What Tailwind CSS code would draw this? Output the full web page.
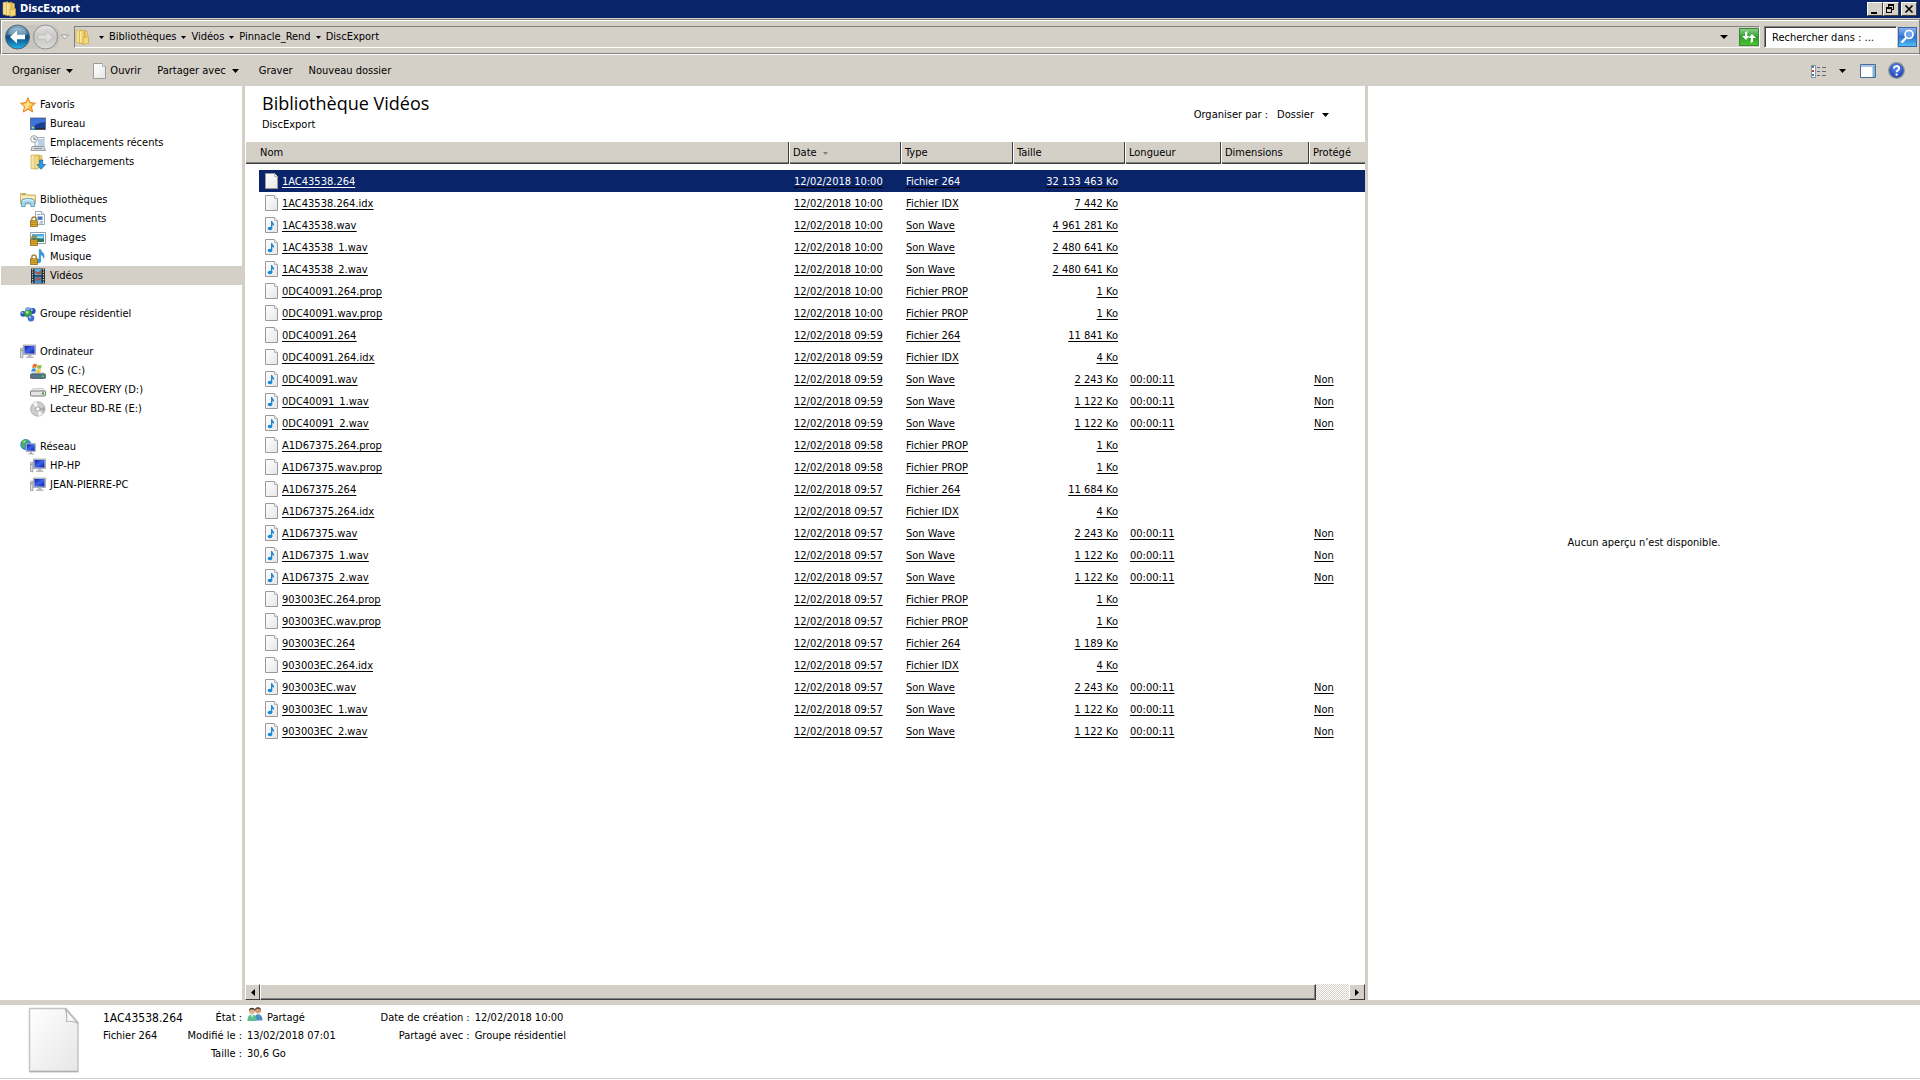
<!DOCTYPE html>
<html lang="fr">
<head>
  <meta charset="UTF-8">
  <meta name="viewport" content="width=device-width, initial-scale=1.0">
  <title>DiscExport</title>
  <script src="https://cdn.jsdelivr.net/npm/@tailwindcss/browser@4"></script>
</head>
<body class="flex flex-col h-screen overflow-hidden bg-white text-black text-[11px] leading-4 font-['DejaVu_Sans_Condensed','DejaVu_Sans',sans-serif]">

  <!-- Icon set -->
  <svg class="absolute size-0" aria-hidden="true">
    <defs>
      <linearGradient id="gFolder" x1="0" x2="1"><stop offset="0" stop-color="#fff3b0"/><stop offset="1" stop-color="#e0b84c"/></linearGradient>
      <linearGradient id="gPage" x1="0" y1="0" x2="1" y2="1"><stop offset="0" stop-color="#fff"/><stop offset="1" stop-color="#e6e6e6"/></linearGradient>
      <linearGradient id="gBlue" x1="0" y1="0" x2="0" y2="1"><stop offset="0" stop-color="#8fb4cc"/><stop offset=".45" stop-color="#1d5f8d"/><stop offset=".5" stop-color="#0b4a7c"/><stop offset="1" stop-color="#25b5ee"/></linearGradient>
      <linearGradient id="gGrey" x1="0" y1="0" x2="0" y2="1"><stop offset="0" stop-color="#e4e4e2"/><stop offset=".5" stop-color="#c6c6c4"/><stop offset="1" stop-color="#dcdcda"/></linearGradient>
      <linearGradient id="gGreen" x1="0" y1="0" x2="0" y2="1"><stop offset="0" stop-color="#8fd08a"/><stop offset=".5" stop-color="#2f9e2c"/><stop offset="1" stop-color="#4cc52e"/></linearGradient>
      <linearGradient id="gSearch" x1="0" y1="0" x2="0" y2="1"><stop offset="0" stop-color="#8fb6ee"/><stop offset=".5" stop-color="#2f6fd4"/><stop offset="1" stop-color="#4fc4f4"/></linearGradient>
      <linearGradient id="gScreen" x1="0" y1="0" x2="1" y2="1"><stop offset="0" stop-color="#0a1ca8"/><stop offset=".5" stop-color="#3d62ea"/><stop offset="1" stop-color="#0a1ca8"/></linearGradient>
      <radialGradient id="gHelp" cx=".5" cy=".35" r=".7"><stop offset="0" stop-color="#5f8df0"/><stop offset="1" stop-color="#1434a4"/></radialGradient>
      <symbol id="folder" viewBox="0 0 16 16">
        <path d="M1 1.500 6 .8V14.500L1 13.500Z" fill="#f3df8e" stroke="#c8a548" stroke-width=".6"/>
        <path d="M4.500 2 10 1.200V15L4.500 14Z" fill="url(#gFolder)" stroke="#c39b39" stroke-width=".6"/>
        <path d="M8 8.500 13.500 7.500V14.500L8 15.500Z" fill="#f5d978" stroke="#c39b39" stroke-width=".6"/>
        <path d="M10 2 12.500 2.500V7.700L10 8.200Z" fill="#edcf6b" stroke="#c39b39" stroke-width=".4"/>
      </symbol>
      <symbol id="page" viewBox="0 0 13 16">
        <path d="M.5.5H9.500L12.500 3.500V15.500H.5Z" fill="url(#gPage)" stroke="#9a9a9a"/>
        <path d="M9.500.5V3.500H12.500" fill="#f4f4f4" stroke="#b4b4b4"/>
      </symbol>
      <symbol id="wave" viewBox="0 0 13 16">
        <path d="M.5.5H9.500L12.500 3.500V15.500H.5Z" fill="url(#gPage)" stroke="#9a9a9a"/>
        <path d="M9.500.5V3.500H12.500" fill="#f4f4f4" stroke="#b4b4b4"/>
        <ellipse cx="5" cy="11.500" rx="2.300" ry="1.800" fill="#1a8ad4"/>
        <path d="M6 11.500V4H7.200C7.400 5.800 9.800 6.300 9 9.700 8.700 8.300 8 7.800 7.300 7.700V11.500Z" fill="#1a8ad4"/>
      </symbol>
      <symbol id="star" viewBox="0 0 16 16">
        <path d="M8 .8 10.200 5.600 15.400 6.200 11.500 9.700 12.700 15 8 12.300 3.300 15 4.500 9.700.6 6.200 5.800 5.600Z" fill="#fdb940" stroke="#e27a1c" stroke-width=".9"/>
        <path d="M8 3 9.300 6.600 12.500 7 9 8.500 8 11 4 13 5.500 9.300 3 7 6.700 6.600Z" fill="#ffe08a"/>
      </symbol>
      <symbol id="desktop" viewBox="0 0 16 16">
        <rect x=".5" y="2" width="15" height="11.500" fill="#1c3f94" stroke="#596b8c" stroke-width=".8"/>
        <path d="M1 2.500H15V6C10 6 6 8 1 12Z" fill="#3f74d8"/>
        <path d="M1 12H15V13.500H1Z" fill="#2b2f3a"/>
        <circle cx="3" cy="12" r="1.900" fill="#40a8e0"/><path d="M2 11H4V12H2Z" fill="#f3c73c"/>
      </symbol>
      <symbol id="recent" viewBox="0 0 16 16">
        <path d="M5 2.500H14V11H5Z" fill="#f5f7fa" stroke="#8a98a8" stroke-width=".8"/>
        <path d="M8 5H13M8 7H13M8 9H13" stroke="#6c9cc8" stroke-width=".9"/>
        <path d="M2 11.500H14L15.500 15.500H1Z" fill="#d5d9de" stroke="#858c96" stroke-width=".8"/>
        <path d="M4 13.500H12" stroke="#8b929b"/>
        <circle cx="4" cy="4" r="3.400" fill="#f3f5f7" stroke="#939ba5" stroke-width=".9"/><path d="M4 2V4.300H6" fill="none" stroke="#596370" stroke-width=".8"/>
      </symbol>
      <symbol id="download" viewBox="0 0 16 16">
        <path d="M1 1H8V14.500H1Z" fill="#f7e39a" stroke="#cba84c" stroke-width=".7"/>
        <path d="M5 2 9.500 1V14L5 15.500Z" fill="url(#gFolder)" stroke="#c39b39" stroke-width=".6"/>
        <path d="M9.500 1.500H12V7H9.500Z" fill="#edcf6b" stroke="#c39b39" stroke-width=".5"/>
        <path d="M9.700 6H12.700V10.500H15.500L11.200 15.300 7 10.500H9.700Z" fill="#2f9be6" stroke="#1466ac" stroke-width=".7"/>
      </symbol>
      <symbol id="libraries" viewBox="0 0 16 16">
        <path d="M.5 1.500H6L7.500 3H15.500V12H.5Z" fill="#f0dc92" stroke="#c4a552" stroke-width=".8"/>
        <path d="M1 4.500H15V6H1Z" fill="#fbf3cc"/><path d="M2.500 2.500H5" stroke="#6bb04c"/>
        <path d="M1.500 14.500V9.500C1.500 7.500 4 6.500 8 6.500S14.500 7.500 14.500 9.500V14.500H10.800V11.500C9 10.700 7 10.700 5.200 11.500V14.500Z" fill="#a3d8f2" stroke="#4793bf" stroke-width=".8"/>
        <path d="M3 9C5.500 7.300 10.500 7.300 13 9" stroke="#e8f8ff" fill="none"/>
      </symbol>
      <symbol id="lock" viewBox="0 0 16 16">
        <path d="M1.800 10.500V8.200C1.800 5.200 6.200 5.200 6.200 8.200V10.500" fill="none" stroke="#a78436" stroke-width="1.400"/>
        <rect x=".5" y="9.800" width="7" height="5.700" fill="#e2af2c" stroke="#8e6a18" stroke-width=".8"/>
        <path d="M1 11.700H7M1 13.600H7" stroke="#a87c1a" stroke-width=".8"/>
      </symbol>
      <symbol id="documents" viewBox="0 0 16 16">
        <path d="M5.500.5H11.500L14.500 3.500V13.500H5.500Z" fill="#fafcff" stroke="#8896a8" stroke-width=".8"/>
        <path d="M11.500.5V3.500H14.500" fill="#dfe7f0" stroke="#8896a8" stroke-width=".7"/>
        <path d="M7 3.500H10.500M10.500 10.500H13M9 12H13" stroke="#84a4cc"/><path d="M7.500 5.500H12.500V8.800H7.500Z" fill="#3e74b8"/>
        <use href="#lock"/>
      </symbol>
      <symbol id="images" viewBox="0 0 16 16">
        <path d="M.5 2.500H15.500V13.500H.5Z" fill="#fff" stroke="#8a949e" stroke-width=".9"/>
        <path d="M2 4H14V12H2Z" fill="#4bb0e0"/><path d="M2 8.500C7 7 10 10 14 8.500V12H2Z" fill="#2c7c5c"/><path d="M7 6.500H13V7.700H7Z" fill="#d9f2fb"/>
        <use href="#lock"/>
      </symbol>
      <symbol id="music" viewBox="0 0 16 16">
        <path d="M9.200.5H10.700C11 3.200 15.500 4.200 13.700 9.500 13.500 7 11.800 6 10.700 5.800V12H9.200Z" fill="#2f9be0" stroke="#1a6cb0" stroke-width=".4"/>
        <ellipse cx="8.300" cy="12" rx="2.700" ry="2.200" fill="#2f9be0"/>
        <use href="#lock"/>
      </symbol>
      <symbol id="videos" viewBox="0 0 16 16">
        <path d="M1 .5H15V15.500H1Z" fill="#20282e"/>
        <path d="M2.500 1V15M13.500 1V15" stroke="#d6e4e6" stroke-width="1.200" stroke-dasharray="1.300 1.200"/>
        <path d="M4.500 1H11.500V7.300H4.500Z" fill="#57b4e4"/><path d="M4.500 8.500H11.500V15H4.500Z" fill="#3e8fd4"/>
        <path d="M4.500 2 7.500 4.500 11.500 2V6L8 6.500 4.500 4.500ZM4.500 12 8 9 11.500 11 8 13Z" fill="#a65648"/>
      </symbol>
      <symbol id="homegroup" viewBox="0 0 16 16">
        <circle cx="8" cy="4" r="3" fill="#7fa6e8"/><circle cx="12.600" cy="5" r="3.100" fill="#2a50b8"/><circle cx="11.800" cy="4" r="1" fill="#b9cff6"/>
        <circle cx="3.200" cy="7.800" r="2.900" fill="#3158bd"/><circle cx="2.400" cy="6.800" r=".9" fill="#bcd0f6"/>
        <circle cx="8.200" cy="7.700" r="3.700" fill="#35a63a"/><circle cx="7.200" cy="6.400" r="1.300" fill="#b4eaa0"/>
        <circle cx="11" cy="12.300" r="3.300" fill="#4470d0"/><circle cx="10" cy="11.300" r="1" fill="#cfdefa"/>
      </symbol>
      <symbol id="computer" viewBox="0 0 16 16">
        <path d="M.5 4.500 2.800 4V14L.5 13.500Z" fill="#d8dcdf" stroke="#858b90" stroke-width=".7"/><path d="M1.200 6.500H2.200" stroke="#3cac3c"/>
        <path d="M3.500 1H15.500V10.500H3.500Z" fill="#c8ccd4" stroke="#8d929b" stroke-width=".7"/>
        <path d="M4.500 2H14.500V9.500H4.500Z" fill="url(#gScreen)"/>
        <path d="M8 10.500H11.500V12.500H13.500V14H6V12.500H8Z" fill="#b8bcc2"/>
      </symbol>
      <symbol id="osdrive" viewBox="0 0 16 16">
        <path d="M2.500 9.500H13.500L15.500 11.500H.5Z" fill="#a8b9c2"/>
        <rect x=".5" y="11" width="15" height="4.500" rx=".8" fill="#567686" stroke="#3b505c" stroke-width=".7"/><path d="M12 13.300H14" stroke="#58e048" stroke-width="1.500"/>
        <path d="M3 1.500C4.500.5 6 .8 7 1.500L6.200 5C5 4.300 3.700 4.300 2.200 5Z" fill="#ec6a2c"/><path d="M7.600 1.800C9 2.500 10.500 2.500 11.800 1.800L11 5.400C9.500 6 8.200 6 6.900 5.300Z" fill="#84c440"/>
        <path d="M2 5.700C3.500 5 4.800 5 6 5.700L5.300 9C4 8.400 2.600 8.400 1.200 9Z" fill="#3d8fe0"/><path d="M6.700 6C8 6.700 9.400 6.700 10.800 6L10 9.500C8.500 10 7.200 10 6 9.300Z" fill="#f8c630"/>
      </symbol>
      <symbol id="drive" viewBox="0 0 16 16">
        <path d="M3 6.500H13L15.500 9.500H.5Z" fill="#e9e9e9" stroke="#b4b4b4" stroke-width=".6"/>
        <rect x=".5" y="9" width="15" height="5" rx="1" fill="#e4e4e4" stroke="#6e6e6e" stroke-width=".9"/><path d="M12 11.500H14" stroke="#2ca52c" stroke-width="2.200"/>
      </symbol>
      <symbol id="disc" viewBox="0 0 16 16">
        <circle cx="7.800" cy="8" r="7.200" fill="#cdcdcd" stroke="#9c9c9c" stroke-width=".7"/>
        <path d="M7.800 8 3 2.700A7 7 0 0 1 7 1Z" fill="#f8f8f8"/><path d="M7.800 8 12.700 13A7 7 0 0 1 8.500 15Z" fill="#f4f4f4"/><path d="M7.800 8 14.700 6A7 7 0 0 1 14.500 10.500Z" fill="#aaa"/>
        <circle cx="7.800" cy="8" r="2.200" fill="#fff" stroke="#8f8f8f" stroke-width=".8"/>
      </symbol>
      <symbol id="network" viewBox="0 0 16 16">
        <circle cx="5.800" cy="5.500" r="5.200" fill="#2f8ed8" stroke="#2268a8" stroke-width=".5"/>
        <path d="M2 2.200C4 0 7 .5 8 1.500L5.500 4 4 5.500 5 8 3.500 9.500 1.500 6Z" fill="#55b848"/><path d="M3 2.500 5 1.500 4.500 3.500Z" fill="#d8f4e4"/>
        <path d="M6 4.500H15.500V12.500H6Z" fill="#c8ccd4" stroke="#8d929b" stroke-width=".6"/><path d="M6.800 5.300H14.700V11.700H6.800Z" fill="url(#gScreen)"/>
        <path d="M10 12.500H12V14.300H14V15.500H8.500V14.300H10Z" fill="#a9b0ba"/>
      </symbol>
      <symbol id="people" viewBox="0 0 16 16">
        <circle cx="11" cy="4.500" r="3" fill="#d29c74"/><path d="M8 4.500C7.500 0 14.500 0 14 4.500L12.500 2.800H9.500Z" fill="#4a3426"/>
        <path d="M7.500 14.500C7.500 9.500 9 8.300 11 8.300S15.500 9.500 15.500 14.500Z" fill="#4a8ec2"/>
        <circle cx="5" cy="5" r="3" fill="#e0b18c"/><path d="M2 5C1.500.5 8.500.5 8 5L6.500 3.500H3.500Z" fill="#3c3230"/>
        <path d="M.5 15C.5 10 2.500 8.500 5 8.500S9.500 10 9.500 15Z" fill="#5fbf92"/><path d="M4 9 5 12 6 9Z" fill="#f0fff8"/>
      </symbol>
    </defs>
  </svg>

  <!-- Title bar -->
  <header class="flex items-center h-[18px] shrink-0 bg-[#0a246a] pl-[2px] pr-[3px] text-white">
    <svg class="size-4"><use href="#folder"/></svg>
    <h1 class="ml-[2px] font-bold">DiscExport</h1>
    <div class="ml-auto flex">
      <button aria-label="Réduire" class="flex h-[14px] w-4 bg-[#d4d0c8] border border-t-white border-l-white border-r-[#404040] border-b-[#404040]">
        <svg class="w-[14px] h-3" viewBox="0 0 14 12"><path d="M3 9H9V11H3Z"/></svg>
      </button>
      <button aria-label="Restaurer" class="flex h-[14px] w-4 bg-[#d4d0c8] border border-t-white border-l-white border-r-[#404040] border-b-[#404040]">
        <svg class="w-[14px] h-3" viewBox="0 0 14 12" shape-rendering="crispEdges"><path d="M4 1H10V7H8V6H9V3H5V4H4ZM2 4H8V10H2ZM3 6V9H7V6Z" fill-rule="evenodd"/></svg>
      </button>
      <button aria-label="Fermer" class="ml-[2px] flex h-[14px] w-4 bg-[#d4d0c8] border border-t-white border-l-white border-r-[#404040] border-b-[#404040]">
        <svg class="w-[14px] h-3" viewBox="0 0 14 12"><path d="M3.500 2.500 10.500 9.500M10.500 2.500 3.500 9.500" stroke="#000" stroke-width="1.700"/></svg>
      </button>
    </div>
  </header>

  <!-- Address bar -->
  <div class="shrink-0 bg-[#d4d0c8] pt-px">
    <div class="flex items-center h-9 pl-1 pr-[2px] border-y border-r border-t-[#808080] border-r-[#808080] border-b-white border-l border-l-[#808080] shadow-[inset_0_1px_#fff,inset_1px_0_#fff,inset_0_-1px_#808080]">
      <svg class="h-7 w-[66px]" viewBox="0 0 66 28" role="img" aria-label="Précédent et suivant">
        <path d="M13 2H44C53 2 55 8 55 14S53 26 44 26H13Z" fill="#c3c1bb" opacity=".7"/>
        <circle cx="12.500" cy="14" r="12" fill="url(#gBlue)" stroke="#4b6374"/>
        <path d="M3 11A10 9 0 0 1 22 11C17 13.500 8 13.500 3 11Z" fill="#fff" opacity=".3"/>
        <path d="M5 14 12 7.500V11.800H20V16.200H12V20.500Z" fill="#fff"/>
        <circle cx="40.500" cy="14" r="12" fill="url(#gGrey)" stroke="#8f9090"/>
        <path d="M48 14 41 7.500V11.800H33V16.200H41V20.500Z" fill="#dedddb" stroke="#b4b4b2" stroke-width=".7"/>
        <path d="M56 12H63.500L59.800 16Z" fill="#f3f3f3" stroke="#8c8c8c" stroke-width=".8"/>
      </svg>
      <nav aria-label="Adresse" class="ml-[3px] flex flex-1 items-center h-[22px] border border-t-[#808080] border-l-[#808080] border-r-white border-b-white">
        <svg class="size-4"><use href="#folder"/></svg>
        <svg class="ml-2 mr-[5px] w-[5px] h-[3px]" viewBox="0 0 5 3"><path d="M0 0H5L2.500 3Z"/></svg>
        <a href="#">Bibliothèques</a>
        <svg class="mx-[5px] w-[5px] h-[3px]" viewBox="0 0 5 3"><path d="M0 0H5L2.500 3Z"/></svg>
        <a href="#">Vidéos</a>
        <svg class="mx-[5px] w-[5px] h-[3px]" viewBox="0 0 5 3"><path d="M0 0H5L2.500 3Z"/></svg>
        <a href="#">Pinnacle_Rend</a>
        <svg class="mx-[5px] w-[5px] h-[3px]" viewBox="0 0 5 3"><path d="M0 0H5L2.500 3Z"/></svg>
        <a href="#">DiscExport</a>
        <button aria-label="Emplacements précédents" class="ml-auto mr-[11px]"><svg class="w-2 h-1" viewBox="0 0 8 4"><path d="M0 0H8L4 4Z"/></svg></button>
        <button aria-label="Actualiser">
          <svg class="w-5 h-[18px]" viewBox="0 0 20 18">
            <rect x=".5" y=".5" width="19" height="17" fill="url(#gGreen)" stroke="#3c8640"/>
            <path d="M8.500 3 6 4.200V8H3L7 12 10.500 8H8Z" fill="#fff"/><path d="M11.500 15 14 13.800V10H17L13 6 9.500 10H12Z" fill="#fff"/>
          </svg>
        </button>
      </nav>
      <input type="text" aria-label="Rechercher" value="Rechercher dans : ..." class="ml-1 h-[22px] w-[133px] bg-white pl-[7px] border border-t-[#808080] border-l-[#808080] border-r-white border-b-white shadow-[inset_1px_1px_#404040] outline-none">
      <button aria-label="Lancer la recherche" class="ml-px">
        <svg class="w-[19px] h-5" viewBox="0 0 19 20">
          <rect x=".5" y=".5" width="18" height="19" fill="url(#gSearch)" stroke="#3a64a8"/>
          <circle cx="11" cy="7.500" r="4" fill="#6fa4ea" stroke="#fff" stroke-width="1.700"/><path d="M8 11 3.500 15.500" stroke="#fff" stroke-width="2.400"/>
        </svg>
      </button>
    </div>
  </div>

  <!-- Command bar -->
  <div class="flex items-center h-[31px] shrink-0 bg-[#d4d0c8] pl-3 pr-[15px]">
    <button class="flex items-center gap-[6px]">Organiser <svg class="w-[7px] h-1" viewBox="0 0 7 4"><path d="M0 0H7L3.500 4Z"/></svg></button>
    <button class="ml-5 flex items-center gap-1"><svg class="w-[13px] h-4"><use href="#page"/></svg>Ouvrir</button>
    <button class="ml-4 flex items-center gap-[6px]">Partager avec <svg class="w-[7px] h-1" viewBox="0 0 7 4"><path d="M0 0H7L3.500 4Z"/></svg></button>
    <button class="ml-5">Graver</button>
    <button class="ml-4">Nouveau dossier</button>
    <button aria-label="Affichage" class="ml-auto flex items-center gap-[13px]">
      <svg class="size-4" viewBox="0 0 16 16" shape-rendering="crispEdges">
        <path d="M1 2H5V14H1Z" fill="#fff" stroke="#8c96a0" stroke-width="1"/><path d="M2 3H4V5H2ZM2 11H4V13H2Z" fill="#4878b0"/><path d="M2 7H4V9H2Z" fill="#c23a2c"/>
        <path d="M7 4.500H10M12 4.500H16M7 8.500H10M12 8.500H16M7 12.500H10M12 12.500H16" stroke="#5c6c7c"/>
      </svg>
      <svg class="w-[7px] h-1" viewBox="0 0 7 4"><path d="M0 0H7L3.500 4Z"/></svg>
    </button>
    <button aria-label="Volet de visualisation" class="ml-[14px]">
      <svg class="size-4" viewBox="0 0 16 16"><path d="M.5 1.500H15.500V14.500H.5Z" fill="#fff" stroke="#4a6c94"/><path d="M1 2H15V4H1Z" fill="#a9c4e4"/><path d="M13 4H15V14H13Z" fill="#8cd0e8" stroke="#4a7ca0" stroke-width=".6"/></svg>
    </button>
    <button aria-label="Aide" class="ml-3 flex">
      <svg class="w-[17px] h-[17px]" viewBox="0 0 17 17"><circle cx="8.500" cy="8.500" r="7.800" fill="url(#gHelp)" stroke="#8d949e" stroke-width="1.200"/><path d="M5.800 6.500C5.800 3.300 11.200 3.300 11.200 6.300 11.200 8.300 8.600 8.200 8.600 10.300" fill="none" stroke="#fff" stroke-width="1.900"/><circle cx="8.600" cy="12.600" r="1.200" fill="#fff"/></svg>
    </button>
  </div>

  <!-- Panes -->
  <div class="flex flex-1 min-h-0">
    <nav id="tree" aria-label="Volet de navigation" class="w-[242px] shrink-0 pt-[9px] pl-px"></nav>

    <main class="flex flex-col flex-1 min-w-0 border-x-[3px] border-[#d4d0c8]">
      <div class="flex h-14 shrink-0 items-start pl-[17px] pr-9">
        <div>
          <h2 class="mt-[3px] text-lg leading-7 font-['Open_Sans',sans-serif]">Bibliothèque Vidéos</h2>
          <p>DiscExport</p>
        </div>
        <div class="ml-auto mt-[21px] flex items-center gap-[9px]">
          <span>Organiser par :</span>
          <button class="flex items-center gap-2">Dossier <svg class="w-[7px] h-1" viewBox="0 0 7 4"><path d="M0 0H7L3.500 4Z"/></svg></button>
        </div>
      </div>

      <div class="flex-1 min-h-0 overflow-hidden">
        <table class="w-full table-fixed border-separate border-spacing-0">
          <colgroup>
            <col class="w-[14px]"><col><col class="w-28"><col class="w-28"><col class="w-28"><col class="w-24"><col class="w-[88px]"><col class="w-14">
          </colgroup>
          <thead>
            <tr class="h-[22px] bg-[#d4d0c8] text-left shadow-[inset_1px_0_#fff,inset_0_-1px_#404040,inset_0_-2px_#808080]">
              <th colspan="2" class="p-0 pl-[15px] font-normal border-r border-[#404040]">Nom</th>
              <th class="p-0 pl-1 font-normal border-r border-[#404040] shadow-[inset_1px_0_#fff]"><span class="flex items-center gap-[6px]">Date <svg class="w-[5px] h-[3px]" viewBox="0 0 5 3"><path d="M0 0H5L2.500 3Z" fill="#808080"/></svg></span></th>
              <th class="p-0 pl-1 font-normal border-r border-[#404040] shadow-[inset_1px_0_#fff]">Type</th>
              <th class="p-0 pl-1 font-normal border-r border-[#404040] shadow-[inset_1px_0_#fff]">Taille</th>
              <th class="p-0 pl-1 font-normal border-r border-[#404040] shadow-[inset_1px_0_#fff]">Longueur</th>
              <th class="p-0 pl-1 font-normal border-r border-[#404040] shadow-[inset_1px_0_#fff]">Dimensions</th>
              <th class="p-0 pl-1 font-normal shadow-[inset_1px_0_#fff]">Protégé</th>
            </tr>
            <tr class="h-[6px]"><td colspan="8" class="p-0"></td></tr>
          </thead>
          <tbody id="files" class="underline underline-offset-2"></tbody>
        </table>
      </div>

      <!-- Horizontal scrollbar -->
      <div class="flex h-4 shrink-0 bg-[conic-gradient(#fff_25%,#d4d0c8_0_50%,#fff_0_75%,#d4d0c8_0)] bg-size-[2px_2px]">
        <button aria-label="Défiler à gauche" class="flex w-[15px] items-center justify-center bg-[#d4d0c8] border border-t-white border-l-white border-r-[#404040] border-b-[#404040]"><svg class="w-1 h-[7px]" viewBox="0 0 4 7"><path d="M4 0V7L0 3.500Z"/></svg></button>
        <div class="flex-1"><div class="h-4 w-[97%] bg-[#d4d0c8] border border-t-white border-l-white border-r-[#404040] border-b-[#404040] shadow-[inset_-1px_-1px_#808080]"></div></div>
        <button aria-label="Défiler à droite" class="flex w-4 items-center justify-center bg-[#d4d0c8] border border-t-white border-l-white border-r-[#404040] border-b-[#404040]"><svg class="w-1 h-[7px]" viewBox="0 0 4 7"><path d="M0 0V7L4 3.500Z"/></svg></button>
      </div>
    </main>

    <aside class="flex w-[552px] shrink-0 items-center justify-center">Aucun aperçu n’est disponible.</aside>
  </div>

  <!-- Details pane -->
  <footer class="flex h-20 shrink-0 items-start border-t-[5px] border-[#d4d0c8] pl-7 shadow-[inset_0_-1px_#fff,inset_0_-2px_#d4d0c8]">
    <svg class="mt-[2px] w-[52px] h-[66px]" viewBox="0 0 52 66">
      <path d="M1.500 1.500H38L50 15.500V64.500H1.500Z" fill="url(#gPage)" stroke="#c4c4c4" stroke-width="1.500"/>
      <path d="M1.500 64.500H50" stroke="#b0b0b0" stroke-width="1.500"/>
      <path d="M37 1.500C39.500 6 39 10 38.500 14.500 42 14 47 14.500 50 16.500Z" fill="#fafafa" stroke="#b8b8b8" stroke-width="1.200"/>
    </svg>
    <div class="ml-[23px] mt-[5px] w-[89px]">
      <p class="text-xs leading-4">1AC43538.264</p>
      <p class="mt-[2px]">Fichier 264</p>
    </div>
    <dl class="mt-[5px] grid grid-cols-[50px_auto] gap-x-[5px] gap-y-[2px] whitespace-nowrap">
      <dt class="justify-self-end">État :</dt><dd class="flex items-center gap-1"><svg class="w-4 h-4 -mt-2"><use href="#people"/></svg>Partagé</dd>
      <dt class="justify-self-end">Modifié le :</dt><dd>13/02/2018 07:01</dd>
      <dt class="justify-self-end">Taille :</dt><dd>30,6 Go</dd>
    </dl>
    <dl class="ml-11 mt-[5px] grid grid-cols-[90px_auto] gap-x-[5px] gap-y-[2px] whitespace-nowrap">
      <dt class="justify-self-end">Date de création :</dt><dd>12/02/2018 10:00</dd>
      <dt class="justify-self-end">Partagé avec :</dt><dd>Groupe résidentiel</dd>
    </dl>
  </footer>

  <script>
    // [icon, label, children]
    const tree = [
      ["star", "Favoris", [["desktop", "Bureau"], ["recent", "Emplacements récents"], ["download", "Téléchargements"]]],
      ["libraries", "Bibliothèques", [["documents", "Documents"], ["images", "Images"], ["music", "Musique"], ["videos", "Vidéos"]]],
      ["homegroup", "Groupe résidentiel", []],
      ["computer", "Ordinateur", [["osdrive", "OS (C:)"], ["drive", "HP_RECOVERY (D:)"], ["disc", "Lecteur BD-RE (E:)"]]],
      ["network", "Réseau", [["computer", "HP-HP"], ["computer", "JEAN-PIERRE-PC"]]]
    ];

    const icon = (name) => `<svg class="size-4 shrink-0"><use href="#${name}"/></svg>`;

    document.getElementById("tree").innerHTML = tree.map(([name, label, children]) => `
      <ul class="mb-[19px]">
        <li><a href="#" class="flex items-center gap-1 h-[19px] pt-px pl-[19px]">${icon(name)}${label}</a></li>
        ${children.map(([n, l]) => `<li><a href="#" class="flex items-center gap-1 h-[19px] pt-px pl-[29px] ${l === "Vidéos" ? "bg-[#d4d0c8]" : ""}">${icon(n)}${l}</a></li>`).join("")}
      </ul>`).join("");

    // name | time | size in Ko
    const files = `1AC43538.264|10:00|32 133 463
1AC43538.264.idx|10:00|7 442
1AC43538.wav|10:00|4 961 281
1AC43538_1.wav|10:00|2 480 641
1AC43538_2.wav|10:00|2 480 641
0DC40091.264.prop|10:00|1
0DC40091.wav.prop|10:00|1
0DC40091.264|09:59|11 841
0DC40091.264.idx|09:59|4
0DC40091.wav|09:59|2 243
0DC40091_1.wav|09:59|1 122
0DC40091_2.wav|09:59|1 122
A1D67375.264.prop|09:58|1
A1D67375.wav.prop|09:58|1
A1D67375.264|09:57|11 684
A1D67375.264.idx|09:57|4
A1D67375.wav|09:57|2 243
A1D67375_1.wav|09:57|1 122
A1D67375_2.wav|09:57|1 122
903003EC.264.prop|09:57|1
903003EC.wav.prop|09:57|1
903003EC.264|09:57|1 189
903003EC.264.idx|09:57|4
903003EC.wav|09:57|2 243
903003EC_1.wav|09:57|1 122
903003EC_2.wav|09:57|1 122`.split("\n").map(line => line.split("|"));

    const types = { "264": "Fichier 264", idx: "Fichier IDX", wav: "Son Wave", prop: "Fichier PROP" };

    document.getElementById("files").innerHTML = files.map(([name, time, size], i) => {
      const ext = name.split(".").pop();
      const timed = ext === "wav" && !name.startsWith("1AC");
      const cell = i === 0 ? "bg-[#0a246a] text-white" : "";
      return `<tr class="h-[22px]">
        <td class="p-0"></td>
        <td class="p-0 pt-[2px] pl-[6px] ${cell}"><a href="#" class="flex items-center gap-1"><svg class="w-[13px] h-4 -mt-[2px]"><use href="#${ext === "wav" ? "wave" : "page"}"/></svg><span class="underline">${name}</span></a></td>
        <td class="p-0 pt-[2px] pl-[5px] ${cell}">12/02/2018 ${time}</td>
        <td class="p-0 pt-[2px] pl-[5px] ${cell}">${types[ext]}</td>
        <td class="p-0 pt-[2px] pr-[7px] text-right ${cell}">${size} Ko</td>
        <td class="p-0 pt-[2px] pl-[5px] ${cell}">${timed ? "00:00:11" : ""}</td>
        <td class="p-0 pt-[2px] ${cell}"></td>
        <td class="p-0 pt-[2px] pl-[5px] ${cell}">${timed ? "Non" : ""}</td>
      </tr>`;
    }).join("");
  </script>

</body>
</html>
